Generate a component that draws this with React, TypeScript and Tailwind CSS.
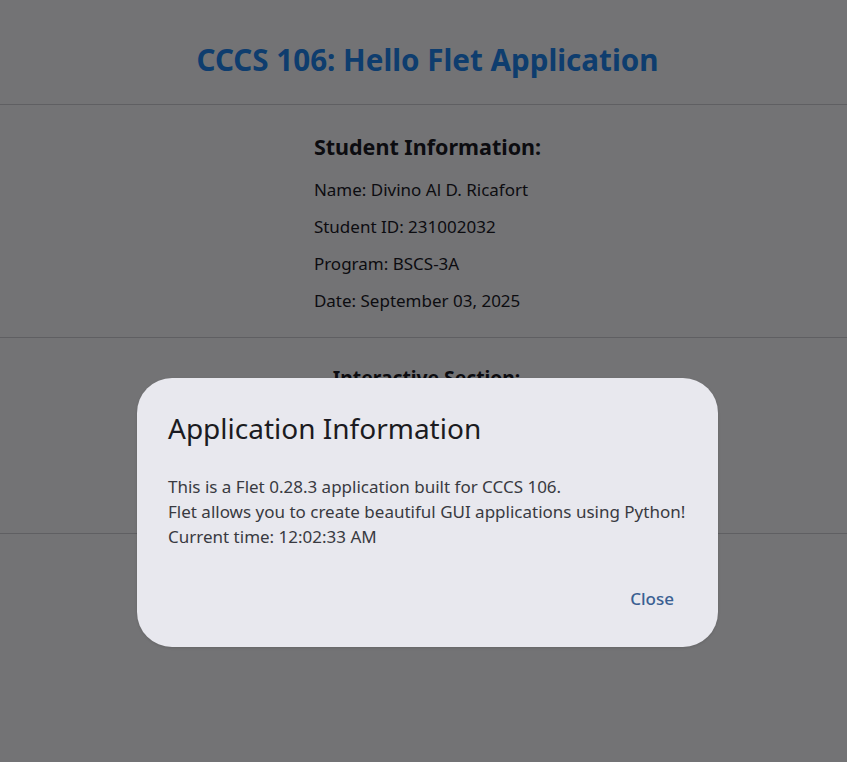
import React from "react";

export default function App() {
  return (
    <div className="relative min-h-[762px] w-full overflow-hidden bg-white font-['Noto_Sans',sans-serif] text-[#1c1b1f]">
      {/* Page content */}
      <div className="flex flex-col">
        <header className="flex justify-center border-b border-[#d3d3d5] pl-[8px] pt-[40px] pb-[24px]">
          <h1 className="text-[29.6px] font-bold leading-[40px] text-[#2188f0]">
            CCCS 106: Hello Flet Application
          </h1>
        </header>

        <section className="flex justify-center border-b border-[#d3d3d5] pl-[8px] pt-[27px] pb-[24px]">
          <div className="flex flex-col items-start">
            <h2 className="mb-[15px] text-[21.5px] font-bold leading-[30px]">Student Information:</h2>
            <div className="flex flex-col gap-[12px] text-[17px] leading-[25px]">
              <p>Name: Divino Al D. Ricafort</p>
              <p>Student ID: 231002032</p>
              <p>Program: BSCS-3A</p>
              <p>Date: September 03, 2025</p>
            </div>
          </div>
        </section>

        <section className="flex flex-col items-center border-b border-[#d3d3d5] pl-[6px] pt-[25px] pb-[26px]">
          <h2 className="text-[19.3px] font-bold leading-[30px]">Interactive Section:</h2>
          <div className="mt-[12px] h-[50px] w-[400px] rounded border border-[#74777f]" />
          <div className="mt-[12px] flex h-[40px] items-center gap-3">
            <div className="h-full w-[110px] rounded-full bg-[#415f91]" />
            <div className="h-full w-[110px] rounded-full bg-[#d6e3ff]" />
            <div className="h-full w-[110px] rounded-full border border-[#74777f]" />
          </div>
        </section>
      </div>

      {/* Modal barrier */}
      <div className="absolute inset-0 bg-[rgba(0,0,4,0.55)]" />

      {/* Dialog */}
      <div className="absolute left-[137px] top-[378px] flex h-[269px] w-[581px] flex-col rounded-[35px] bg-[#e8e8ee] pl-[31px] pr-[29px] pt-[31px] shadow-[0_1px_3px_rgba(0,0,0,0.12)]">
        <h3 className="text-[28px] font-normal leading-[38px] text-[#1b1b21]">Application Information</h3>
        <div className="mt-[27px] flex flex-col text-[17px] leading-[25px] text-[#393a41]">
          <p>This is a Flet 0.28.3 application built for CCCS 106.</p>
          <p>Flet allows you to create beautiful GUI applications using Python!</p>
          <p>Current time: 12:02:33 AM</p>
        </div>
        <div className="mt-[25px] flex justify-end">
          <button className="flex h-[50px] items-center rounded-full px-[15px] text-[17px] font-medium text-[#3a5f92]">
            Close
          </button>
        </div>
      </div>
    </div>
  );
}
